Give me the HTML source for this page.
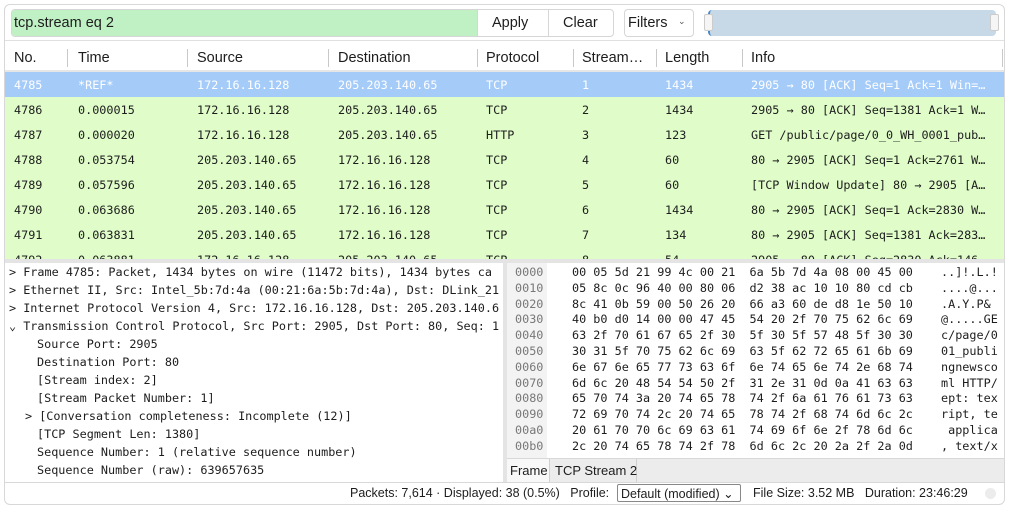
<!DOCTYPE html>
<html><head><meta charset="utf-8"><style>
*{box-sizing:border-box;margin:0;padding:0}
body{width:1009px;height:510px;background:#fff;position:relative;overflow:hidden;font-family:"Liberation Sans",sans-serif;font-size:14px;color:#1d1d1d}
.a{position:absolute;white-space:pre}
.m{font-family:"DejaVu Sans Mono","Liberation Mono",monospace;font-size:11.8px}
.frame{position:absolute;left:4px;top:4px;width:1001px;height:501px;border:1px solid #d8d8d8;border-radius:6px}
.row{position:absolute;left:5px;width:999px;height:25px;background:#e0fdc9}
.row span{position:absolute;top:6px}
.sep{position:absolute;top:49px;width:1px;height:18px;background:#c8c8c8}
</style></head><body>
<div class="frame"></div>
<div class="a" style="left:11px;top:9px;width:603px;height:28px;border:1px solid #d6d6d6;border-radius:4px;background:#fff"></div>
<div class="a" style="left:12px;top:10px;width:465px;height:26px;background:#c0f1c4;border-radius:3px 0 0 3px"></div>
<div class="a" style="left:14px;top:15px;font-size:14.5px">tcp.stream eq 2</div>
<div class="a" style="left:477px;top:10px;width:1px;height:26px;background:#d6d6d6"></div>
<div class="a" style="left:548px;top:10px;width:1px;height:26px;background:#d6d6d6"></div>
<div class="a" style="left:492px;top:15px;font-size:14.5px">Apply</div>
<div class="a" style="left:563px;top:15px;font-size:14.5px">Clear</div>
<div class="a" style="left:624px;top:9px;width:70px;height:28px;border:1px solid #d6d6d6;border-radius:4px"></div>
<div class="a" style="left:628px;top:15px;font-size:14.5px">Filters</div>
<div class="a" style="left:678px;top:16px;font-size:9px;color:#555">&#8964;</div>
<div class="a" style="left:708px;top:10px;width:288px;height:26px;background:#c7d9e7;border-radius:4px;border-left:2px solid #4a88c7"></div>
<div class="a" style="left:704px;top:14px;width:9px;height:17px;background:#f5f5f5;border:1px solid #ccc;border-radius:2px"></div>
<div class="a" style="left:990px;top:14px;width:9px;height:17px;background:#f5f5f5;border:1px solid #ccc;border-radius:2px"></div>
<div class="a" style="left:5px;top:40px;width:999px;height:1px;background:#e0e0e0"></div>
<div class="a" style="left:14px;top:50px;font-size:14.5px">No.</div>
<div class="a" style="left:78px;top:50px;font-size:14.5px">Time</div>
<div class="a" style="left:197px;top:50px;font-size:14.5px">Source</div>
<div class="a" style="left:338px;top:50px;font-size:14.5px">Destination</div>
<div class="a" style="left:486px;top:50px;font-size:14.5px">Protocol</div>
<div class="a" style="left:582px;top:50px;font-size:14.5px">Stream…</div>
<div class="a" style="left:665px;top:50px;font-size:14.5px">Length</div>
<div class="a" style="left:751px;top:50px;font-size:14.5px">Info</div>
<div class="sep" style="left:67px"></div><div class="sep" style="left:187px"></div><div class="sep" style="left:328px"></div><div class="sep" style="left:477px"></div><div class="sep" style="left:573px"></div><div class="sep" style="left:656px"></div><div class="sep" style="left:742px"></div><div class="sep" style="left:1002px"></div>
<div class="a" style="left:5px;top:70px;width:999px;height:2px;background:#e6e6e6"></div>
<div class="m">
<div class="row" style="top:72px;background:#a5cbf9;color:#fff"><span style="left:9px">4785</span><span style="left:73px">*REF*</span><span style="left:192px">172.16.16.128</span><span style="left:333px">205.203.140.65</span><span style="left:481px">TCP</span><span style="left:577px">1</span><span style="left:660px">1434</span><span style="left:746px">2905 → 80 [ACK] Seq=1 Ack=1 Win=…</span></div>
<div class="row" style="top:97px"><span style="left:9px">4786</span><span style="left:73px">0.000015</span><span style="left:192px">172.16.16.128</span><span style="left:333px">205.203.140.65</span><span style="left:481px">TCP</span><span style="left:577px">2</span><span style="left:660px">1434</span><span style="left:746px">2905 → 80 [ACK] Seq=1381 Ack=1 W…</span></div>
<div class="row" style="top:122px"><span style="left:9px">4787</span><span style="left:73px">0.000020</span><span style="left:192px">172.16.16.128</span><span style="left:333px">205.203.140.65</span><span style="left:481px">HTTP</span><span style="left:577px">3</span><span style="left:660px">123</span><span style="left:746px">GET /public/page/0_0_WH_0001_pub…</span></div>
<div class="row" style="top:147px"><span style="left:9px">4788</span><span style="left:73px">0.053754</span><span style="left:192px">205.203.140.65</span><span style="left:333px">172.16.16.128</span><span style="left:481px">TCP</span><span style="left:577px">4</span><span style="left:660px">60</span><span style="left:746px">80 → 2905 [ACK] Seq=1 Ack=2761 W…</span></div>
<div class="row" style="top:172px"><span style="left:9px">4789</span><span style="left:73px">0.057596</span><span style="left:192px">205.203.140.65</span><span style="left:333px">172.16.16.128</span><span style="left:481px">TCP</span><span style="left:577px">5</span><span style="left:660px">60</span><span style="left:746px">[TCP Window Update] 80 → 2905 [A…</span></div>
<div class="row" style="top:197px"><span style="left:9px">4790</span><span style="left:73px">0.063686</span><span style="left:192px">205.203.140.65</span><span style="left:333px">172.16.16.128</span><span style="left:481px">TCP</span><span style="left:577px">6</span><span style="left:660px">1434</span><span style="left:746px">80 → 2905 [ACK] Seq=1 Ack=2830 W…</span></div>
<div class="row" style="top:222px"><span style="left:9px">4791</span><span style="left:73px">0.063831</span><span style="left:192px">205.203.140.65</span><span style="left:333px">172.16.16.128</span><span style="left:481px">TCP</span><span style="left:577px">7</span><span style="left:660px">134</span><span style="left:746px">80 → 2905 [ACK] Seq=1381 Ack=283…</span></div>
<div class="row" style="top:247px;height:12px;overflow:hidden"><span style="left:9px">4792</span><span style="left:73px">0.063881</span><span style="left:192px">172.16.16.128</span><span style="left:333px">205.203.140.65</span><span style="left:481px">TCP</span><span style="left:577px">8</span><span style="left:660px">54</span><span style="left:746px">2905 → 80 [ACK] Seq=2830 Ack=146</span></div>
<div class="a" style="left:5px;top:259px;width:999px;height:4px;background:#e4e4e4"></div>
<div class="a" style="left:5px;top:263px;width:498px;height:219px;overflow:hidden">
<div class="a" style="left:4px;top:2px">&gt; Frame 4785: Packet, 1434 bytes on wire (11472 bits), 1434 bytes ca</div>
<div class="a" style="left:4px;top:20px">&gt; Ethernet II, Src: Intel_5b:7d:4a (00:21:6a:5b:7d:4a), Dst: DLink_21</div>
<div class="a" style="left:4px;top:38px">&gt; Internet Protocol Version 4, Src: 172.16.16.128, Dst: 205.203.140.6</div>
<div class="a" style="left:4px;top:56px">⌄ Transmission Control Protocol, Src Port: 2905, Dst Port: 80, Seq: 1</div>
<div class="a" style="left:32px;top:74px">Source Port: 2905</div>
<div class="a" style="left:32px;top:92px">Destination Port: 80</div>
<div class="a" style="left:32px;top:110px">[Stream index: 2]</div>
<div class="a" style="left:32px;top:128px">[Stream Packet Number: 1]</div>
<div class="a" style="left:20px;top:146px">&gt; [Conversation completeness: Incomplete (12)]</div>
<div class="a" style="left:32px;top:164px">[TCP Segment Len: 1380]</div>
<div class="a" style="left:32px;top:182px">Sequence Number: 1 (relative sequence number)</div>
<div class="a" style="left:32px;top:200px">Sequence Number (raw): 639657635</div>
</div>
<div class="a" style="left:503px;top:263px;width:4px;height:219px;background:#e4e4e4"></div>
<div class="a" style="left:507px;top:263px;width:40px;height:195px;background:#f3f3f3"></div>
<div class="a" style="left:507px;top:263px;width:497px;height:195px;overflow:hidden">
<div class="a" style="left:8px;top:2px;color:#777;line-height:15.8px">0000
0010
0020
0030
0040
0050
0060
0070
0080
0090
00a0
00b0</div>
<div class="a" style="left:65px;top:2px;line-height:15.8px">00 05 5d 21 99 4c 00 21  6a 5b 7d 4a 08 00 45 00
05 8c 0c 96 40 00 80 06  d2 38 ac 10 10 80 cd cb
8c 41 0b 59 00 50 26 20  66 a3 60 de d8 1e 50 10
40 b0 d0 14 00 00 47 45  54 20 2f 70 75 62 6c 69
63 2f 70 61 67 65 2f 30  5f 30 5f 57 48 5f 30 30
30 31 5f 70 75 62 6c 69  63 5f 62 72 65 61 6b 69
6e 67 6e 65 77 73 63 6f  6e 74 65 6e 74 2e 68 74
6d 6c 20 48 54 54 50 2f  31 2e 31 0d 0a 41 63 63
65 70 74 3a 20 74 65 78  74 2f 6a 61 76 61 73 63
72 69 70 74 2c 20 74 65  78 74 2f 68 74 6d 6c 2c
20 61 70 70 6c 69 63 61  74 69 6f 6e 2f 78 6d 6c
2c 20 74 65 78 74 2f 78  6d 6c 2c 20 2a 2f 2a 0d</div>
<div class="a" style="left:434px;top:2px;line-height:15.8px">..]!.L.!
....@...
.A.Y.P&amp;
@.....GE
c/page/0
01_publi
ngnewsco
ml HTTP/
ept: tex
ript, te
 applica
, text/x</div>
</div>
</div>
<div class="a" style="left:507px;top:458px;width:497px;height:24px;background:#ececec;border-top:1px solid #d8d8d8"></div>
<div class="a" style="left:507px;top:459px;width:43px;height:23px;background:#f8f8f8;border-right:1px solid #d0d0d0"></div>
<div class="a" style="left:510px;top:463px;font-size:13px">Frame</div>
<div class="a" style="left:550px;top:459px;width:87px;height:23px;border-right:1px solid #d0d0d0"></div>
<div class="a" style="left:555px;top:463px;font-size:13px">TCP Stream 2</div>
<div class="a" style="left:5px;top:482px;width:999px;height:1px;background:#d8d8d8"></div>
<div class="a" style="left:350px;top:486px;font-size:12.5px">Packets: 7,614 · Displayed: 38 (0.5%)   Profile:</div>
<div class="a" style="left:617px;top:484px;width:124px;height:18px;border:1px solid #888;border-radius:2px;background:#fff"></div>
<div class="a" style="left:621px;top:486px;font-size:12.5px">Default (modified) ⌄</div>
<div class="a" style="left:753px;top:486px;font-size:12.5px">File Size: 3.52 MB   Duration: 23:46:29</div>
<div class="a" style="left:985px;top:488px;width:11px;height:11px;border-radius:50%;background:#ececec"></div>
</body></html>
